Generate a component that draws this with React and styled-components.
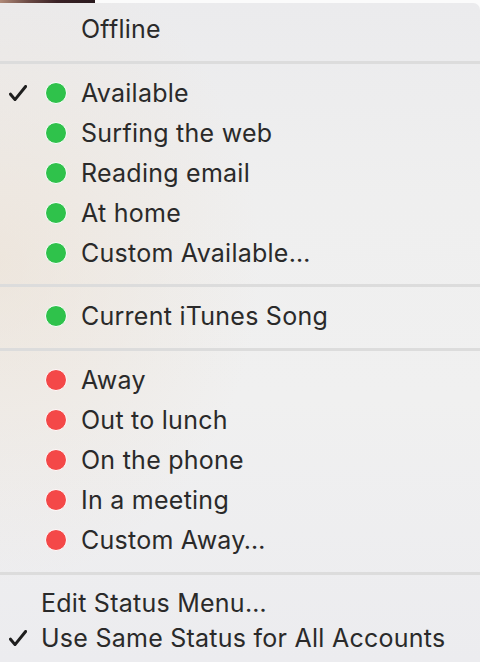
import React from "react";
import styled, { createGlobalStyle } from "styled-components";

const Global = createGlobalStyle`
  html, body { margin: 0; padding: 0; background: #ffffff; }
  body { width: 480px; height: 662px; overflow: hidden; font-family: Inter, "Liberation Sans", sans-serif; }
`;

const Page = styled.div`
  width: 480px;
  height: 662px;
  overflow: hidden;
  display: flex;
  flex-direction: column;
  background: #fbfbfb;
`;

const Backdrop = styled.div`
  height: 3px;
  flex: none;
  display: flex;
  overflow: hidden;
  align-items: flex-end;
`;

const Avatar = styled.div`
  width: 95px;
  height: 3px;
  background: linear-gradient(90deg, #b08a78 0%, #6b4a44 30%, #3a2226 60%, #2a1a1e 100%);
`;

const BackdropText = styled.div`
  margin-left: 16px;
  font-size: 26px;
  line-height: 26px;
  color: #3a3a3a;
  white-space: nowrap;
  transform: translateY(-19px);
`;

const Menu = styled.div`
  flex: 1;
  border-top-right-radius: 7px;
  background:
    radial-gradient(ellipse 260px 320px at 0px 260px, rgba(236, 222, 206, 0.55), rgba(236, 222, 206, 0) 100%),
    linear-gradient(180deg, #ebebed 0%, #efefef 30%, #f0f0f0 60%, #ececef 100%);
  padding-top: 6px;
  display: flex;
  flex-direction: column;
`;

const Row = styled.div`
  display: flex;
  align-items: center;
  height: ${(p) => (p.$compact ? 35 : 40)}px;
  font-size: 25px;
  letter-spacing: 0.25px;
  color: #2a2a2a;
  white-space: nowrap;
`;

const CheckSlot = styled.div`
  flex: none;
  width: ${(p) => (p.$narrow ? 41 : 44)}px;
  box-sizing: border-box;
  padding-left: 9px;
  display: flex;
  align-items: center;
`;

const DotSlot = styled.div`
  flex: none;
  width: 24px;
  margin-right: 13px;
  display: flex;
  align-items: center;
  justify-content: center;
`;

const Dot = styled.span`
  width: 20px;
  height: 20px;
  border-radius: 50%;
  background: ${(p) => (p.$color === "red" ? "#f44848" : "#2fc24b")};
  border: 1.7px solid #ffffff;
`;

const Label = styled.span`
  display: block;
`;

const Separator = styled.div`
  height: 3px;
  background: #dcdcdc;
  margin: ${(p) => (p.$last ? "12.5px 0 10px" : "11.5px 0 9px")};
`;

const Check = () => (
  <svg width="18" height="16" viewBox="0 0 18 16">
    <path d="M1.5 9.2 L6 14.6 L16.6 1.5" fill="none" stroke="#1e1e1e" strokeWidth="3" strokeLinecap="round" strokeLinejoin="round" />
  </svg>
);

const StatusRow = ({ label, color, checked }) => (
  <Row>
    <CheckSlot>{checked && <Check />}</CheckSlot>
    <DotSlot>{color && <Dot $color={color} />}</DotSlot>
    <Label>{label}</Label>
  </Row>
);

const available = ["Available", "Surfing the web", "Reading email", "At home", "Custom Available…"];
const away = ["Away", "Out to lunch", "On the phone", "In a meeting", "Custom Away…"];

export default function App() {
  return (
    <Page>
      <Global />
      <Backdrop>
        <Avatar />
        <BackdropText>Hana Yeon: I don't think I'd go</BackdropText>
      </Backdrop>
      <Menu>
        <StatusRow label="Offline" />
        <Separator />
        {available.map((l, i) => (
          <StatusRow key={l} label={l} color="green" checked={i === 0} />
        ))}
        <Separator />
        <StatusRow label="Current iTunes Song" color="green" />
        <Separator />
        {away.map((l) => (
          <StatusRow key={l} label={l} color="red" />
        ))}
        <Separator $last />
        <Row $compact>
          <CheckSlot $narrow />
          <Label>Edit Status Menu…</Label>
        </Row>
        <Row $compact>
          <CheckSlot $narrow>
            <Check />
          </CheckSlot>
          <Label>Use Same Status for All Accounts</Label>
        </Row>
      </Menu>
    </Page>
  );
}
